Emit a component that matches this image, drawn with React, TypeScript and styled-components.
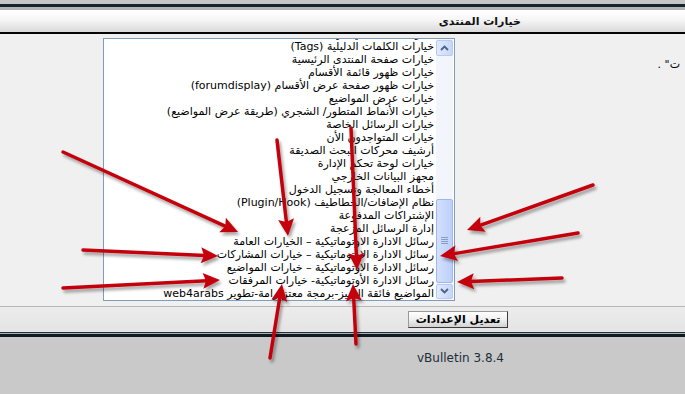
import React from 'react'
import styled, { createGlobalStyle } from 'styled-components'

const GlobalStyle = createGlobalStyle`
  html, body {
    margin: 0;
    padding: 0;
    background: #c9c9c9;
  }
  body {
    font-family: Tahoma, "DejaVu Sans", sans-serif;
  }
`

const Page = styled.div`
  position: relative;
  width: 685px;
  height: 394px;
  overflow: hidden;
  display: flex;
  flex-direction: column;
  background: #c9c9c9;
`

const TopStrip = styled.div`
  height: 4px;
  background: #c6c6c6;
  border-bottom: 3px solid #14262d;
`

const Header = styled.div`
  height: 22px;
  border-top: 3px solid #b4b4b4;
  border-bottom: 2px solid #050505;
  background: linear-gradient(#ffffff, #f6f6f6 45%, #d9d9d9);
  display: flex;
  align-items: center;
  justify-content: flex-end;
  padding-right: 164px;
`

const Title = styled.span`
  font-size: 11px;
  font-weight: bold;
  color: #111;
  direction: rtl;
`

const OptionRow = styled.div`
  display: flex;
  background: #f0f0f0;
  padding: 4px 0 5px 103px;
  height: 263px;
`

const ListBox = styled.div`
  width: 350px;
  height: 261px;
  border: 1px solid #7f9db9;
  background: #fff;
  display: flex;
`

const Items = styled.div`
  flex: 1;
  overflow: hidden;
  direction: rtl;
  padding-right: 2px;
`

const ItemsInner = styled.div`
  margin-top: -12px;
`

const Item = styled.div`
  height: 13px;
  line-height: 13px;
  font-size: 11px;
  color: #000;
  white-space: nowrap;
  text-align: right;
`

const Scrollbar = styled.div`
  width: 17px;
  display: flex;
  flex-direction: column;
  background: #f2f5fc;
  margin-right: 1px;
`

const ScrollButton = styled.div`
  height: 16px;
  margin: 1px 0;
  border: 1px solid #b9c9ef;
  border-radius: 2px;
  background: linear-gradient(90deg, #e1eafe, #c5d6fb);
  display: flex;
  align-items: center;
  justify-content: center;
  box-sizing: border-box;
`

const Track = styled.div<{ $top: number }>`
  flex: 1;
  display: flex;
  flex-direction: column;
  padding-top: ${p => p.$top}px;
`

const Thumb = styled.div<{ $size: number }>`
  height: ${p => p.$size}px;
  border: 1px solid #9fb7ea;
  border-radius: 2px;
  background: linear-gradient(90deg, #d3e0fd, #bccffb);
  box-sizing: border-box;
  display: flex;
  align-items: center;
  justify-content: center;
`

const Grip = styled.div`
  width: 7px;
  height: 7px;
  background: repeating-linear-gradient(#8a9cc2 0 1px, transparent 1px 2px);
`

const Description = styled.div`
  flex: 1;
  direction: rtl;
  text-align: right;
  padding: 20px 5px 0 0;
  font-size: 11px;
  color: #000;
`

const SubmitRow = styled.div`
  height: 25px;
  border-top: 1px solid #b7b7b7;
  background: linear-gradient(#ececec, #e4e4e4);
  display: flex;
  align-items: center;
  padding-left: 408px;
`

const SubmitButton = styled.button`
  width: 100px;
  height: 17px;
  padding: 0;
  border: 1px solid #3a3a3a;
  border-top-color: #9a9a9a;
  border-left-color: #9a9a9a;
  background: linear-gradient(#ffffff, #f0f0f0 50%, #d2d2d2);
  font-family: Tahoma, "DejaVu Sans", sans-serif;
  font-size: 11px;
  font-weight: bold;
  color: #000;
  direction: rtl;
`

const BottomRule = styled.div`
  height: 1px;
  background: #22333b;
  border-bottom: 1px solid #a9aeb0;
`

const ThickRule = styled.div`
  height: 3px;
  background: #0e1b21;
`

const Footer = styled.div`
  flex: 1;
  background: #c9c9c9;
  padding: 14px 0 0 417px;
  font-family: "DejaVu Sans", Verdana, sans-serif;
  font-size: 12px;
  color: #1d2d3b;
`

const Overlay = styled.svg`
  position: absolute;
  left: 0;
  top: 0;
  pointer-events: none;
`

const items = [
  'خيارات البحث في الرسائل',
  'خيارات الكلمات الدليلية (Tags)',
  'خيارات صفحة المنتدى الرئيسية',
  'خيارات ظهور قائمة الأقسام',
  'خيارات ظهور صفحة عرض الأقسام (forumdisplay)',
  'خيارات عرض المواضيع',
  'خيارات الأنماط المتطور/ الشجري (طريقة عرض المواضيع)',
  'خيارات الرسائل الخاصة',
  'خيارات المتواجدون الأن',
  'أرشيف محركات البحث الصديقة',
  'خيارات لوحة تحكم الإدارة',
  'مجهز البيانات الخارجي',
  'أخطاء المعالجة وتسجيل الدخول',
  'نظام الإضافات/الخطاطيف (Plugin/Hook)',
  'الإشتراكات المدفوعة',
  'إدارة الرسائل المزعجة',
  'رسائل الادارة الاوتوماتيكية – الخيارات العامة',
  'رسائل الادارة الاوتوماتيكية – خيارات المشاركات',
  'رسائل الادارة الاوتوماتيكية – خيارات المواضيع',
  'رسائل الادارة الأوتوماتيكية- خيارات المرفقات',
  'المواضيع فائقة التميز-برمجة معتز-رامة-تطوير web4arabs',
]

// tail -> tip
const arrows: [number, number, number, number][] = [
  [63, 152, 238, 232],
  [83, 250, 218, 256],
  [63, 288, 220, 280],
  [277, 140, 288, 236],
  [351, 128, 357, 270],
  [270, 358, 282, 284],
  [356, 344, 353, 284],
  [593, 185, 467, 230],
  [578, 233, 440, 256],
  [562, 278, 457, 282],
]

const Arrow = ({ a }: { a: [number, number, number, number] }) => {
  const [x1, y1, x2, y2] = a
  const len = Math.hypot(x2 - x1, y2 - y1)
  const ux = (x2 - x1) / len
  const uy = (y2 - y1) / len
  const L = 17
  const W = 8
  const bx = x2 - ux * L
  const by = y2 - uy * L
  const nx = -uy
  const ny = ux
  const head = `${x2},${y2} ${bx + nx * W},${by + ny * W} ${bx + ux * 3},${by + uy * 3} ${bx - nx * W},${by - ny * W}`
  return (
    <g>
      <line x1={x1} y1={y1} x2={bx + ux * 4} y2={by + uy * 4} stroke='#c4000b' strokeWidth={3.5} strokeLinecap='round' />
      <polygon points={head} fill='#c4000b' />
    </g>
  )
}

const Chevron = ({ up }: { up?: boolean }) => (
  <svg width='9' height='6' viewBox='0 0 9 6'>
    <polyline
      points={up ? '1,5 4.5,1.5 8,5' : '1,1 4.5,4.5 8,1'}
      fill='none'
      stroke='#4d6185'
      strokeWidth={1.8}
    />
  </svg>
)

const App: React.FC = () => {
  return (
    <>
      <GlobalStyle />
      <Page>
        <TopStrip />
        <Header>
          <Title>خيارات المنتدى</Title>
        </Header>

        {/* select + description */}
        <OptionRow>
          <ListBox>
            <Items>
              <ItemsInner>
                {items.map(t => <Item key={t}>{t}</Item>)}
              </ItemsInner>
            </Items>
            <Scrollbar>
              <ScrollButton><Chevron up /></ScrollButton>
              <Track $top={142}>
                <Thumb $size={84}><Grip /></Thumb>
              </Track>
              <ScrollButton><Chevron /></ScrollButton>
            </Scrollbar>
          </ListBox>
          <Description>ت" .</Description>
        </OptionRow>

        <SubmitRow>
          <SubmitButton>تعديل الإعدادات</SubmitButton>
        </SubmitRow>
        <BottomRule />
        <ThickRule />

        <Footer>vBulletin 3.8.4</Footer>

        <Overlay width={685} height={394} viewBox='0 0 685 394'>
          <defs>
            <filter id='shadow' x='-20%' y='-20%' width='140%' height='140%'>
              <feDropShadow dx='2' dy='3' stdDeviation='1.8' floodColor='#000' floodOpacity='0.35' />
            </filter>
          </defs>
          <g filter='url(#shadow)'>
            {arrows.map((a, i) => <Arrow key={i} a={a} />)}
          </g>
        </Overlay>
      </Page>
    </>
  )
}

export default App
